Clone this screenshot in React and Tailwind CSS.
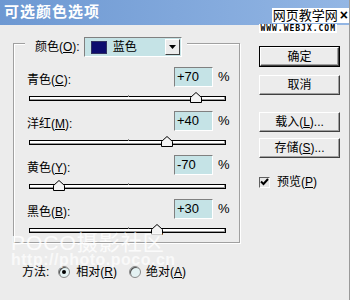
import React from 'react';

const font = "font-['Liberation_Sans','Noto_Sans_CJK_SC',sans-serif]";

// selective colour sliders, value range -100..+100
const rows = [
  { label: '青色', key: 'C', value: 70 },
  { label: '洋红', key: 'M', value: 40 },
  { label: '黄色', key: 'Y', value: -70 },
  { label: '黑色', key: 'B', value: 30 },
];

function Label({ text, k }) {
  return (
    <span className="text-[12px] leading-none text-black whitespace-nowrap">
      {text}(<u>{k}</u>):
    </span>
  );
}

function Slider({ value }) {
  const pct = ((value + 100) / 200) * 100;
  return (
    <div className="relative h-[5px] w-[197px] border border-black bg-white shadow-[inset_-1px_-1px_0_#9a9a9a]">
      <div className="absolute left-1/2 -top-[2px] h-[2px] w-[1px] bg-[#8a8a8a]" />
      <svg
        className="absolute -top-[5px]"
        style={{ left: `calc(${pct}% - 6px)` }}
        width="12"
        height="11"
        viewBox="0 0 12 11"
      >
        <path d="M6 0.5 L11.5 5.5 L11.5 10.5 L0.5 10.5 L0.5 5.5 Z" fill="#f4f4f4" stroke="#000" strokeWidth="1" />
      </svg>
    </div>
  );
}

function Button({ children, isDefault }) {
  const inner = (
    <div className="flex h-full w-full items-center justify-center border border-t-white border-l-white border-r-[#404040] border-b-[#404040] bg-[#ececec] text-[12px] text-black shadow-[inset_-1px_-1px_0_#a0a0a0]">
      {children}
    </div>
  );
  if (isDefault) {
    return <div className="h-[21px] w-[81px] border border-black">{inner}</div>;
  }
  return <div className="h-[20px] w-[81px]">{inner}</div>;
}

function Radio({ checked }) {
  return (
    <div className="flex h-[12px] w-[12px] items-center justify-center rounded-full border border-[#8a8a8a] bg-[#e4f2f3] shadow-[inset_1px_1px_0_#505050]">
      {checked && <div className="h-[4px] w-[4px] rounded-full bg-black" />}
    </div>
  );
}

export default function App() {
  return (
    <div className={`${font} relative h-[300px] w-[352px] overflow-hidden bg-white`}>
      <div className="h-[300px] w-[350px] border-r border-[#9a9a9a] bg-[#ececec]">
        {/* title bar */}
        <div className="flex h-[25px] items-center bg-gradient-to-r from-[#6d98d2] to-[#93b6e4] pl-[4px]">
          <span className="text-[15px] font-bold tracking-[1px] text-white">可选颜色选项</span>
        </div>

        <div className="flex pl-[13px]">
          {/* left column */}
          <div className="flex flex-col">
            <div className="mt-[18px] h-[200px] w-[227px] border border-[#a0a0a0] shadow-[1px_1px_0_#fff,inset_1px_1px_0_#fff]">
              <div className="-mt-[7px] ml-[11px] flex w-fit items-center bg-[#ececec] pl-[10px] pr-[5px]">
                <Label text="颜色" k="O" />
                <div className="ml-[4px] flex h-[20px] w-[98px] items-center border border-t-[#808080] border-l-[#808080] border-r-white border-b-white bg-[#c5e3e6]">
                  <div className="ml-[6px] h-[13px] w-[16px] border border-[#303060] bg-[#0c0c6e]" />
                  <span className="ml-[6px] flex-1 text-[12px] text-black">蓝色</span>
                  <div className="mr-[1px] flex h-[16px] w-[15px] items-center justify-center border border-t-white border-l-white border-r-[#404040] border-b-[#404040] bg-[#ececec]">
                    <svg width="7" height="4" viewBox="0 0 7 4">
                      <path d="M0 0 H7 L3.5 4 Z" fill="#000" />
                    </svg>
                  </div>
                </div>
              </div>

              <div className="mt-[10px] flex flex-col">
                {rows.map((r) => (
                  <div key={r.key} className="flex flex-col">
                    <div className="flex h-[20px] items-center pl-[13px]">
                      <div className="mt-[4px] flex-1">
                        <Label text={r.label} k={r.key} />
                      </div>
                      <div className="flex h-[20px] w-[39px] items-center border border-t-[#808080] border-l-[#808080] border-r-white border-b-white bg-[#c5e3e6] pl-[2px] text-[13px] text-black">
                        {r.value > 0 ? `+${r.value}` : `${r.value}`}
                      </div>
                      <span className="ml-[5px] mr-[11px] w-[10px] text-[13px] text-black">%</span>
                    </div>
                    <div className="pb-[10px] pl-[15px] pt-[9px]">
                      <Slider value={r.value} />
                    </div>
                  </div>
                ))}
              </div>
            </div>

            {/* method */}
            <div className="mt-[21px] flex h-[16px] items-center pl-[9px] text-[12px] text-black">
              <span>方法:</span>
              <div className="ml-[9px]">
                <Radio checked />
              </div>
              <span className="ml-[6px]">
                相对(<u>R</u>)
              </span>
              <div className="ml-[12px]">
                <Radio />
              </div>
              <span className="ml-[5px]">
                绝对(<u>A</u>)
              </span>
            </div>
          </div>

          {/* right column */}
          <div className="ml-[19px] flex flex-col pt-[21px]">
            <Button isDefault>确定</Button>
            <div className="mt-[8px]">
              <Button>取消</Button>
            </div>
            <div className="mt-[17px]">
              <Button>
                载入(<u>L</u>)...
              </Button>
            </div>
            <div className="mt-[6px]">
              <Button>
                存储(<u>S</u>)...
              </Button>
            </div>
            <div className="mt-[15px] flex items-center">
              <div className="flex h-[11px] w-[11px] items-center justify-center border border-t-[#606060] border-l-[#606060] border-r-white border-b-white bg-[#e8e8e8]">
                <svg width="9" height="8" viewBox="0 0 9 8">
                  <path d="M1 3.5 L3.5 6 L8 1" fill="none" stroke="#000" strokeWidth="2" />
                </svg>
              </div>
              <span className="ml-[7px] text-[12px] text-black">
                预览(<u>P</u>)
              </span>
            </div>
          </div>
        </div>
      </div>

      {/* watermarks laid over the dialog */}
      <div className="absolute right-[3px] top-[8px] flex flex-col items-end">
        <div className="flex items-center">
          <span className="bg-white px-[1px] text-[13px] leading-[15px] text-black">网页教学网</span>
          <span className="bg-white px-[1px] text-[14px] font-bold leading-[15px] text-black">×</span>
        </div>
        <span className="mr-[12px] mt-[1px] bg-white px-[1px] font-['DejaVu_Sans_Mono',monospace] text-[8px] font-bold leading-[9px] tracking-[1px] text-black">
          WWW.WEBJX.COM
        </span>
      </div>
      <div className="pointer-events-none absolute left-[11px] top-[233px] flex flex-col text-white/80">
        <span className="text-[21px] leading-[19px] tracking-[1px]">POCO摄影社区</span>
        <span className="text-[16px] font-bold leading-[15px] tracking-[0.5px] text-white/70">http://photo.poco.cn</span>
      </div>
    </div>
  );
}
